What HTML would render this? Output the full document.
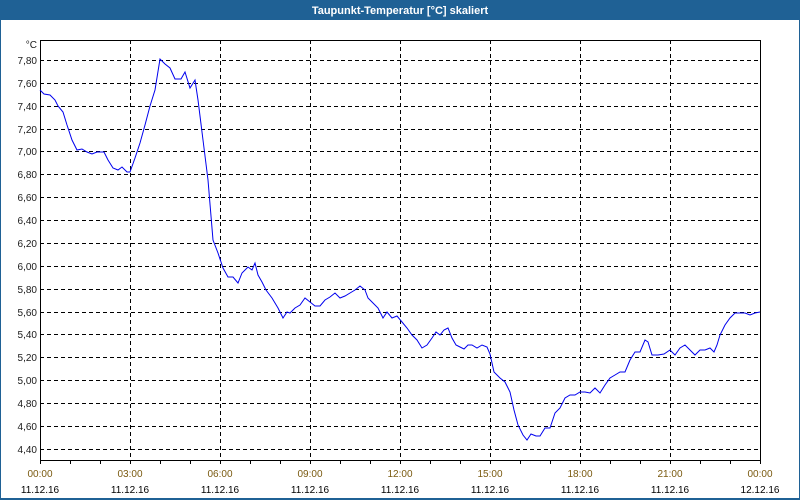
<!DOCTYPE html>
<html><head><meta charset="utf-8"><style>
html,body{margin:0;padding:0;width:800px;height:500px;overflow:hidden;background:#fff;font-family:"Liberation Sans",sans-serif}
</style></head><body>
<svg width="800" height="500" xmlns="http://www.w3.org/2000/svg" style="display:block">
<rect x="0" y="0" width="800" height="500" fill="#fff"/>
<rect x="0" y="0" width="800" height="20" fill="#1f6195"/>
<rect x="0" y="0" width="1" height="500" fill="#1f6195"/>
<rect x="799" y="0" width="1" height="500" fill="#1f6195"/>
<rect x="0" y="498" width="800" height="2" fill="#1f6195"/>
<text x="400" y="14" fill="#fff" font-size="11" font-weight="bold" text-anchor="middle" font-family="Liberation Sans, sans-serif">Taupunkt-Temperatur [°C] skaliert</text>
<g stroke="#000" stroke-width="1" stroke-dasharray="4,3" fill="none" shape-rendering="crispEdges">
<path d="M40 60.5H760M40 83.5H760M40 106.5H760M40 129.5H760M40 151.5H760M40 174.5H760M40 197.5H760M40 220.5H760M40 243.5H760M40 266.5H760M40 289.5H760M40 312.5H760M40 334.5H760M40 357.5H760M40 380.5H760M40 403.5H760M40 426.5H760M40 449.5H760"/>
<path d="M130.5 40V460M220.5 40V460M310.5 40V460M400.5 40V460M490.5 40V460M580.5 40V460M670.5 40V460"/>
</g>
<g stroke="#000" stroke-width="1" fill="none" shape-rendering="crispEdges">
<rect x="40.5" y="40.5" width="720" height="420"/>
<path d="M40.5 460V464M70.5 460V464M100.5 460V464M130.5 460V464M160.5 460V464M190.5 460V464M220.5 460V464M250.5 460V464M280.5 460V464M310.5 460V464M340.5 460V464M370.5 460V464M400.5 460V464M430.5 460V464M460.5 460V464M490.5 460V464M520.5 460V464M550.5 460V464M580.5 460V464M610.5 460V464M640.5 460V464M670.5 460V464M700.5 460V464M730.5 460V464M760.5 460V464"/>
</g>
<polyline fill="none" stroke="#0000ee" stroke-width="1" points="40,90 44,94 50,95 55,100 58,106 63,112 67,125 72,140 77,150 82,149 87,152 92,154 97,152 104,152 108,160 113,168 118,170 122,167 127,172 130,172 135,158 140,143 145,125 150,106 155,90 160,59 165,64 170,68 175,79 181,79 185,72 190,88 195,80 198,100 203,140 208,180 213,240 218,253 223,268 228,277 233,277 238,283 242,273 248,267 252,270 255,263 258,275 262,282 266,290 272,298 278,308 283,318 287,312 290,313 295,308 300,305 305,298 310,302 315,306 320,306 325,300 330,297 335,293 340,298 345,296 350,293 355,290 360,286 365,290 368,298 372,302 378,308 383,318 387,312 392,318 397,316 402,322 407,328 412,335 417,340 422,348 427,345 432,338 436,332 440,335 444,330 448,328 452,338 456,345 460,347 464,349 468,345 472,345 477,348 482,345 487,347 490,354 494,372 500,378 505,382 510,392 514,410 518,425 523,435 527,440 531,434 536,436 540,436 545,428 550,428 555,413 560,408 565,398 570,395 575,395 580,392 585,392 590,393 595,388 600,393 605,385 610,378 615,375 620,372 625,372 630,360 635,352 640,352 645,340 648,342 652,355 658,355 664,354 670,350 675,355 680,348 685,345 690,350 695,355 700,350 705,350 710,348 714,352 717,345 720,335 725,325 730,318 735,313 740,313 745,313 750,315 755,313 760,312"/>
<g font-size="10" fill="#1a1a1a" text-anchor="end" font-family="Liberation Sans, sans-serif">
<text x="37" y="48">°C</text>
<text x="37" y="64">7,80</text><text x="37" y="87">7,60</text><text x="37" y="110">7,40</text><text x="37" y="133">7,20</text><text x="37" y="155">7,00</text><text x="37" y="178">6,80</text><text x="37" y="201">6,60</text><text x="37" y="224">6,40</text><text x="37" y="247">6,20</text><text x="37" y="270">6,00</text><text x="37" y="293">5,80</text><text x="37" y="316">5,60</text><text x="37" y="338">5,40</text><text x="37" y="361">5,20</text><text x="37" y="384">5,00</text><text x="37" y="407">4,80</text><text x="37" y="430">4,60</text><text x="37" y="453">4,40</text>
</g>
<g font-size="10" text-anchor="middle" font-family="Liberation Sans, sans-serif">
<g fill="#7a5a10">
<text x="40" y="477">00:00</text><text x="130" y="477">03:00</text><text x="220" y="477">06:00</text><text x="310" y="477">09:00</text><text x="400" y="477">12:00</text><text x="490" y="477">15:00</text><text x="580" y="477">18:00</text><text x="670" y="477">21:00</text><text x="760" y="477">00:00</text>
</g>
<g fill="#000">
<text x="40" y="493">11.12.16</text><text x="130" y="493">11.12.16</text><text x="220" y="493">11.12.16</text><text x="310" y="493">11.12.16</text><text x="400" y="493">11.12.16</text><text x="490" y="493">11.12.16</text><text x="580" y="493">11.12.16</text><text x="670" y="493">11.12.16</text><text x="760" y="493">12.12.16</text>
</g>
</g>
</svg>
</body></html>
